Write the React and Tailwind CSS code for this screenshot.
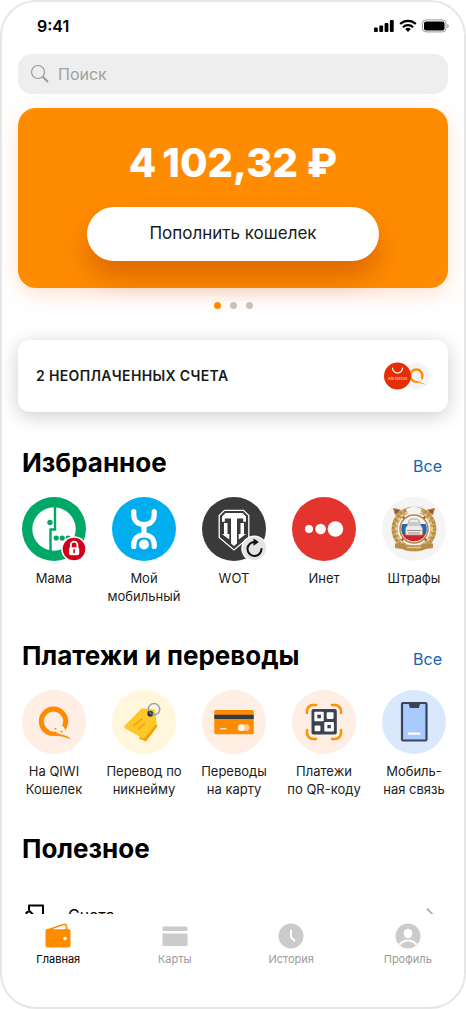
import React from "react";

const QiwiMark = ({ background }) => (
  <g>
    <circle cx="31.500" cy="31.300" r="12.200" fill="none" stroke="#ff8c00" strokeWidth="5" />
    <path
      d="M27 40.500c2-1 2.500-3.500 5-4.500 1.500-.6 2.500-1.500 3-3.500 1.500.8 2 1.500 2.300 2.800 2.700-.3 5 1.200 5.500 3.700.3 1.600 0 2.800 1.200 4.500l3 3.500c-3-1.500-5.500-2.200-8.500-2.800-2.200-.4-3.500-1.200-4.500-2.500-2.500.3-4.500-.2-7-1.200Z"
      fill={background}
    />
    <path
      d="M33 45.300c5-1.500 8.500-.5 11.500.8 2 .9 3.500 2 4.300 3.400-3-1.400-5.800-2.500-8.800-3-2.500-.5-4.500-.5-7-1.200Z"
      fill="#ff8c00"
    />
    <circle cx="33.500" cy="38.700" r=".9" fill="#ff8c00" />
    <circle cx="39.500" cy="41.500" r="1" fill="#ff8c00" />
  </g>
);

const MamaIcon = () => (
  <svg viewBox="0 0 64 64" className="w-16 h-16">
    <circle cx="32" cy="32" r="32" fill="#00a868" />
    <circle cx="32" cy="32" r="21.700" fill="#fff" />
    <path d="M33 8v24.500h-4.500V55" fill="none" stroke="#00a868" strokeWidth="2.400" />
    <circle cx="28" cy="25.500" r="2.700" fill="#00a868" />
    <circle cx="34.200" cy="41" r="2.600" fill="#00a868" />
    <circle cx="40.200" cy="41" r="2.600" fill="#00a868" />
    <circle cx="46.200" cy="41" r="2.600" fill="#00a868" />
    <circle cx="52" cy="52" r="12.800" fill="#fff" />
    <circle cx="52" cy="52" r="11.300" fill="#d0021b" />
    <path d="M48.800 51v-3a3.300 3.300 0 0 1 6.600 0v3" fill="none" stroke="#fff" strokeWidth="1.800" />
    <rect x="47" y="50.300" width="10.200" height="8" rx="2" fill="#fff" />
    <path d="M52.100 52.800v2.800" stroke="#d0021b" strokeWidth="1.600" strokeLinecap="round" />
  </svg>
);

const YotaIcon = () => (
  <svg viewBox="0 0 64 64" className="w-16 h-16">
    <circle cx="32" cy="32" r="32" fill="#00aeef" />
    <g fill="none" stroke="#fff" strokeWidth="5.200" strokeLinecap="round">
      <path d="M21.800 14.500v3.500c0 6 4.500 9.500 10.200 9.500S42.200 24 42.200 18v-3.500" />
      <path d="M21.800 49.500v-2c0-6 4.500-9.500 10.200-9.500s10.200 3.500 10.200 9.500v2" />
      <path d="M32 28v9" />
    </g>
    <circle cx="32" cy="47.500" r="5" fill="#fff" />
  </svg>
);

const TanksIcon = () => (
  <svg viewBox="0 0 64 64" className="w-16 h-16">
    <circle cx="32" cy="32" r="32" fill="#3a3a3a" />
    <path
      d="M22.500 13.300h19l5.300 5.200v22L32 53 17.200 40.500v-22Z"
      fill="none"
      stroke="#fff"
      strokeWidth="1.300"
    />
    <path
      d="M23.500 16h17l3.500 3.500v5.300h-2.800v-3.300H35v25L32 49l-3-2.500v-25h-6.200v3.300H20v-5.300Z"
      fill="#fff"
    />
    <path d="M22 26h3.500v11h1.800v5.500L20 37h2Z" fill="#fff" />
    <path d="M42 26h-3.500v11h-1.800v5.500L44 37h-2Z" fill="#fff" />
    <circle cx="52.300" cy="51.500" r="13" fill="#fff" />
    <circle cx="52.300" cy="51.500" r="11.700" fill="#e4e4e4" />
    <path
      d="M53 45a7 7 0 1 0 6.500 7"
      fill="none"
      stroke="#111"
      strokeWidth="2"
      strokeLinecap="round"
    />
    <path d="M51.500 41.500 56.800 45l-5.300 3.800Z" fill="#111" />
  </svg>
);

const InternetIcon = () => (
  <svg viewBox="0 0 64 64" className="w-16 h-16">
    <circle cx="32" cy="32" r="32" fill="#e5332d" />
    <circle cx="17" cy="32" r="4" fill="#fff" />
    <circle cx="28.600" cy="32" r="5.300" fill="#fff" />
    <circle cx="43.400" cy="32" r="7.800" fill="#fff" />
  </svg>
);

const FinesIcon = () => (
  <svg viewBox="0 0 64 64" className="w-16 h-16">
    <circle cx="32" cy="32" r="32" fill="#f4f4f4" />
    <path d="m14 13 36 36M50 13 14 49" stroke="#8a6238" strokeWidth="2.400" />
    <path
      d="m11.500 11.500 7 1.500-5 5ZM52.500 11.500l-7 1.500 5 5Z"
      fill="#8a5a34"
      stroke="#b98b56"
    />
    <circle cx="32" cy="32" r="19.500" fill="none" stroke="#c8a05c" strokeWidth="6" />
    <circle
      cx="32"
      cy="32"
      r="20"
      fill="none"
      stroke="#a57c3e"
      strokeWidth="4"
      strokeDasharray="1 3.200"
    />
    <circle
      cx="32"
      cy="32"
      r="18"
      fill="none"
      stroke="#e6cb8e"
      strokeWidth="2"
      strokeDasharray="3 2"
    />
    <path d="M24 12 32 9l8 3-2 4.500H26Z" fill="#f4f4f4" />
    <path d="M13 46.500h9l3 2h14l3-2h9v4.500l-7 1-4 1.500H24L20 52l-7-1Z" fill="#b88d49" />
    <path d="M25 50.500h14" stroke="#e6cb8e" strokeWidth="1.500" />
    <circle cx="32" cy="32" r="14" fill="#f7f3ea" stroke="#b58a48" strokeWidth="1.500" />
    <path d="M20.300 27h23.400a12.700 12.700 0 0 1 0 10H20.300a12.700 12.700 0 0 1 0-10Z" fill="#2469ad" />
    <path d="M20 36h24a12.800 12.800 0 0 1-24 0Z" fill="#cf2430" />
    <path
      d="m27 24 1.500-2h7l1.500 2 2 5 1.500 2v7h-17v-7l1.500-2Z"
      fill="#eeeae6"
      stroke="#9c8f8b"
      strokeWidth=".8"
    />
    <path d="M27.500 25h9l1.500 4H26Z" fill="#c3cbd6" />
    <path d="M25 33.500h14M26 36h12" stroke="#9a8c89" strokeWidth="1" />
  </svg>
);

const WalletTransferIcon = () => (
  <svg viewBox="0 0 64 64" className="w-16 h-16">
    <circle cx="32" cy="32" r="32" fill="#ffeee3" />
    <QiwiMark background="#ffeee3" />
  </svg>
);

const TagIcon = () => (
  <svg viewBox="0 0 64 64" className="w-16 h-16">
    <circle cx="32" cy="32" r="32" fill="#fff6dc" />
    <path d="m41 26 4.300 10.500L34 51.500l-7-3Z" fill="#f7a000" />
    <path d="m29.700 18.300 13 .9 2 14.300-12.200 14.500a1.500 1.500 0 0 1-2.100.2L12.600 38a1.500 1.500 0 0 1-.3-2.100Z" fill="#fec828" />
    <path d="m21.500 35.500 8.500-6.500M26.500 39l6-5.500" stroke="#f3a51c" strokeWidth="1.800" strokeLinecap="round" />
    <circle cx="38.300" cy="23.700" r="3" fill="#2e3a4c" />
    <circle cx="42" cy="19.300" r="5.700" fill="none" stroke="#98a2b0" strokeWidth="1.500" />
    <path d="M36.500 21c0 2.500 1.500 4 4 4" fill="none" stroke="#2e3a4c" strokeWidth="1.500" />
  </svg>
);

const BankCardIcon = () => (
  <svg viewBox="0 0 64 64" className="w-16 h-16">
    <circle cx="32" cy="32" r="32" fill="#ffeee3" />
    <rect x="12.300" y="20" width="39.400" height="24.300" rx="1.500" fill="#ff8c00" />
    <path d="M12.300 24.700h39.400V29H12.300Z" fill="#333b45" />
    <path d="M18.500 38.700h5.500" stroke="#ffe0bd" strokeWidth="1.500" strokeLinecap="round" />
    <circle cx="44" cy="37.700" r="3.400" fill="#ffc98c" />
    <circle cx="39.300" cy="37.700" r="3.400" fill="#fff0df" />
  </svg>
);

const QrIcon = () => (
  <svg viewBox="0 0 64 64" className="w-16 h-16">
    <circle cx="32" cy="32" r="32" fill="#ffeee3" />
    <path
      d="M15 23v-2a6 6 0 0 1 6-6h3M40 15h3a6 6 0 0 1 6 6v2M49 40v3a6 6 0 0 1-6 6h-3M24 49h-3a6 6 0 0 1-6-6v-3"
      fill="none"
      stroke="#ff9100"
      strokeWidth="2.500"
      strokeLinecap="round"
    />
    <rect x="19.500" y="19" width="25.300" height="25.500" rx="2" fill="#3c4350" />
    <rect x="22.300" y="21.700" width="9.400" height="9.600" rx="1" fill="#fff" />
    <rect x="25.300" y="24.700" width="3.600" height="3.600" fill="#3c4350" />
    <rect x="34.700" y="22.300" width="6.800" height="6.800" rx="1" fill="#fff" />
    <rect x="22.600" y="35.400" width="5.800" height="5.800" rx="1" fill="#fff" />
    <rect x="32.300" y="32" width="9.600" height="9.400" rx="1" fill="#fff" />
    <rect x="35.400" y="34.900" width="3.400" height="3.400" fill="#3c4350" />
  </svg>
);

const PhoneIcon = () => (
  <svg viewBox="0 0 64 64" className="w-16 h-16">
    <circle cx="32" cy="32" r="32" fill="#dae8fe" />
    <rect x="20" y="13" width="24.500" height="37.500" rx="1" fill="#a9caff" stroke="#3b4454" strokeWidth="2.200" />
    <path d="M26.500 12.500h11.800L37 18h-9.200Z" fill="#3b4454" />
    <path d="M27 43.700h10.500" stroke="#fff" strokeWidth="2.200" strokeLinecap="round" />
  </svg>
);

const WalletTab = () => (
  <svg viewBox="0 0 26 26" className="w-6.5 h-6.5">
    <path d="M2.500 7 18.500 1.500q3-.8 3 2.500v4" fill="none" stroke="#ff8c00" strokeWidth="1.800" strokeLinejoin="round" />
    <rect x=".5" y="6" width="25" height="18.500" rx="2" fill="#ff8c00" />
    <path d="M8 6.200 19.500 3.500v2.700Z" fill="#fff" />
    <circle cx="20" cy="15.500" r="1.800" fill="#fff" />
  </svg>
);

const CardsTab = () => (
  <svg viewBox="0 0 26 26" className="w-6.5 h-6.5" fill="#cbcbcb">
    <path d="M2 3.500h22q1.500 0 1.500 1.500v3H.5V5Q.5 3.500 2 3.500Z" />
    <path d="M.5 10.500h25v11q0 1.500-1.500 1.500H2Q.5 23 .5 21.500Z" />
  </svg>
);

const HistoryTab = () => (
  <svg viewBox="0 0 26 26" className="w-6.5 h-6.5">
    <circle cx="13" cy="13" r="12.500" fill="#cbcbcb" />
    <path d="M13 7.500v6.500l3.500 3.700" fill="none" stroke="#fff" strokeWidth="2" strokeLinecap="round" />
  </svg>
);

const ProfileTab = () => (
  <svg viewBox="0 0 26 26" className="w-6.5 h-6.5">
    <circle cx="13" cy="13" r="12.500" fill="#cbcbcb" />
    <ellipse cx="13" cy="10.500" rx="4.300" ry="4.800" fill="#fff" />
    <path d="M4.500 21.500c4.500-5.500 12.500-5.500 17 0" fill="none" stroke="#fff" strokeWidth="2" />
  </svg>
);

const StatusBar = () => (
  <div className="flex items-center justify-between h-12 pl-[35px] pr-3.5">
    <span className="text-base font-semibold">9:41</span>
    <svg viewBox="0 0 76 14" className="w-[76px] h-3.5" fill="#000">
      <rect x="0" y="8.500" width="3.800" height="4.500" rx="1" />
      <rect x="5.300" y="6.500" width="3.800" height="6.500" rx="1" />
      <rect x="10.600" y="4" width="3.800" height="9" rx="1" />
      <rect x="15.900" y="1" width="3.800" height="12" rx="1" />
      <g fill="none" stroke="#000" strokeWidth="2.200">
        <path d="M26.200 5a11.200 11.200 0 0 1 15.600 0" />
        <path d="M28.900 8.200a7.300 7.300 0 0 1 10.200 0" />
      </g>
      <path d="M34 12.900 31.200 10a4 4 0 0 1 5.600 0Z" />
      <rect x="48.500" y=".9" width="23.500" height="12" rx="3.500" fill="none" stroke="#000" strokeOpacity=".4" />
      <rect x="50" y="2.400" width="20.500" height="9" rx="2" />
      <path d="M73.300 5v4q1.500-.7 1.500-2t-1.500-2Z" opacity=".4" />
    </svg>
  </div>
);

const favourites = [
  { icon: MamaIcon, title: "Мама" },
  { icon: YotaIcon, title: "Мой\nмобильный" },
  { icon: TanksIcon, title: "WOT" },
  { icon: InternetIcon, title: "Инет" },
  { icon: FinesIcon, title: "Штрафы" },
];

const payments = [
  { icon: WalletTransferIcon, title: "На QIWI\nКошелек" },
  { icon: TagIcon, title: "Перевод по\nникнейму" },
  { icon: BankCardIcon, title: "Переводы\nна карту" },
  { icon: QrIcon, title: "Платежи\nпо QR-коду" },
  { icon: PhoneIcon, title: "Мобиль-\nная связь" },
];

const tabs = [
  { icon: WalletTab, title: "Главная", active: true },
  { icon: CardsTab, title: "Карты" },
  { icon: HistoryTab, title: "История" },
  { icon: ProfileTab, title: "Профиль" },
];

const Section = ({ title, items }) => (
  <section className="mt-[35px]">
    <div className="flex items-baseline justify-between pl-5 pr-5.5">
      <h2 className="text-[26px] leading-8 font-bold">{title}</h2>
      <a href="#all" className="text-base leading-6 text-[#1461b5]">
        Все
      </a>
    </div>
    <div className="grid grid-cols-5 mt-[18px] pl-[7px] pr-[5px]">
      {items.map((item) => (
        <button key={item.title} type="button" className="flex flex-col items-center">
          <item.icon />
          <span className="mt-2 text-[13px] leading-[18px] whitespace-pre text-center text-[#1c1c1c]">
            {item.title}
          </span>
        </button>
      ))}
    </div>
  </section>
);

const App = () => {
  return (
    <div className="flex flex-col h-screen overflow-hidden bg-white border-2 border-[#e6e6e6] rounded-[36px] font-['Inter',sans-serif] text-black">
      <main className="flex-1 min-h-0 overflow-y-auto [scrollbar-width:none]">
        <StatusBar />

        <label className="flex items-center h-10 mx-4 mt-1 px-3 gap-2 bg-[#eee] rounded-[14px]">
          <svg viewBox="0 0 20 20" className="w-5 h-5" fill="none" stroke="#9b9b9b">
            <circle cx="8" cy="8" r="6.500" strokeWidth="1.200" />
            <path d="m12.800 12.800 5.200 5.200" strokeWidth="2" />
          </svg>
          <input
            type="search"
            aria-label="Поиск"
            placeholder="Поиск"
            className="flex-1 min-w-0 bg-transparent text-base outline-none placeholder:text-[#a0a0a0]"
          />
        </label>

        {/* Balance */}
        <section className="flex flex-col h-[180px] mx-4 mt-3.5 px-[69px] pt-[31px] bg-[#ff8c00] rounded-[18px] shadow-[0_6px_20px_rgba(255,120,40,0.22)]">
          <p className="text-[40px] leading-12 font-extrabold text-white text-center whitespace-nowrap">
            4{"\u2009"}102,32 ₽
          </p>
          <button
            type="button"
            className="mt-5 h-[54px] w-full bg-white rounded-full text-[17px] text-[#1a1a1a] shadow-[0_16px_28px_rgba(170,50,0,0.4)]"
          >
            Пополнить кошелек
          </button>
        </section>
        <div className="flex justify-center gap-[9px] mt-3.5">
          <span className="size-[7px] rounded-full bg-[#ff8c00]" />
          <span className="size-[7px] rounded-full bg-[#c9c2bb]" />
          <span className="size-[7px] rounded-full bg-[#c9c2bb]" />
        </div>

        {/* Unpaid bills */}
        <button
          type="button"
          className="flex items-center justify-between h-18 w-[calc(100%-32px)] mx-4 mt-[31px] pl-4.5 pr-4 bg-white rounded-xl shadow-[0_4px_20px_rgba(0,0,0,0.2)]"
        >
          <span className="text-sm font-semibold tracking-wide text-[#1a1a1a]">
            2 НЕОПЛАЧЕННЫХ СЧЕТА
          </span>
          <svg viewBox="0 0 48 28" className="w-12 h-7">
            <circle cx="32.500" cy="14" r="13.500" fill="#f4f4f4" />
            <svg x="22.500" y="4" width="20" height="20" viewBox="12 12 40 40">
              <QiwiMark background="#f4f4f4" />
            </svg>
            <circle cx="13.500" cy="14" r="13.500" fill="#e62e04" />
            <path d="M8.500 6a5 5 0 0 0 10 0" fill="none" stroke="#fff" strokeWidth="1.200" strokeLinecap="round" />
            <text x="13.500" y="18" fontSize="4" fill="#ffd9ce" textAnchor="middle">
              AliExpress
            </text>
          </svg>
        </button>

        <Section title="Избранное" items={favourites} />
        <Section title="Платежи и переводы" items={payments} />

        <section className="mt-[35px] px-5">
          <h2 className="text-[26px] leading-8 font-bold">Полезное</h2>
          <a href="#bills" className="flex items-center mt-[34px] h-8">
            <svg viewBox="0 0 24 24" className="w-6 h-6 mr-5.5" fill="none" stroke="#000" strokeWidth="2">
              <path d="M7 7V2.500h14v19H7V17" strokeLinejoin="round" />
              <path d="M4.500 12V9.500l3-1.500L12 12.500" />
            </svg>
            <span className="flex-1 text-base">Счета</span>
            <svg viewBox="0 0 8 16" className="w-2 h-4 mr-2.5" fill="none" stroke="#b4b4b4" strokeWidth="2">
              <path d="m1 1.500 6 6.500-6 6.500" />
            </svg>
          </a>
        </section>
      </main>

      <nav className="grid grid-cols-4 shrink-0 h-[93px] -mx-0.5 pt-[9px]">
        {tabs.map((tab) => (
          <a
            key={tab.title}
            href="#tab"
            className={
              tab.active
                ? "flex flex-col items-center gap-0.5 text-[11px] leading-4 text-black"
                : "flex flex-col items-center gap-0.5 text-[11px] leading-4 text-[#9b9b9b]"
            }
          >
            <tab.icon />
            {tab.title}
          </a>
        ))}
      </nav>
    </div>
  );
};

export default App;
